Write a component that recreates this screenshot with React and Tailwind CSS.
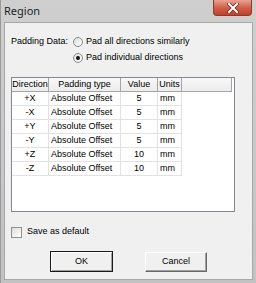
import React from "react";

const rows = [
  { dir: "+X", type: "Absolute Offset", value: "5", units: "mm" },
  { dir: "-X", type: "Absolute Offset", value: "5", units: "mm" },
  { dir: "+Y", type: "Absolute Offset", value: "5", units: "mm" },
  { dir: "-Y", type: "Absolute Offset", value: "5", units: "mm" },
  { dir: "+Z", type: "Absolute Offset", value: "10", units: "mm" },
  { dir: "-Z", type: "Absolute Offset", value: "10", units: "mm" },
];

function Radio({ checked }) {
  return (
    <span className="w-[10px] h-[10px] rounded-full border border-[#8d8d8d] bg-gradient-to-br from-[#dcdcdc] to-white flex items-center justify-center shrink-0">
      {checked && <span className="w-[4px] h-[4px] rounded-full bg-[#111]" />}
    </span>
  );
}

function CloseButton() {
  return (
    <div className="w-[39px] h-[16px] mr-[4px] rounded-b-[4px] border border-t-0 border-[#8b3b2c] bg-gradient-to-b from-[#e6a392] via-[#d2604a] to-[#c0402a] flex items-center justify-center">
      <svg width="12" height="10" viewBox="0 0 12 10">
        <path d="M2 1 L10 9 M10 1 L2 9" stroke="#5a2a22" strokeWidth="3.4" strokeLinecap="square" />
        <path d="M2 1 L10 9 M10 1 L2 9" stroke="#ffffff" strokeWidth="2" strokeLinecap="square" />
      </svg>
    </div>
  );
}

export default function App() {
  return (
    <div className="w-[256px] h-[283px] bg-gradient-to-b from-[#cfcfcf] to-[#c2c2c2] border-l border-[#9a9a9a] flex flex-col font-['Liberation_Sans',Arial,sans-serif] text-[9px] text-black overflow-hidden">
      {/* title bar */}
      <div className="h-[22px] flex items-start shrink-0">
        <span className="ml-[3px] mt-[4px] text-[11px] leading-[14px] font-['Noto_Sans',sans-serif] text-[#1e1e1e]">Region</span>
        <div className="ml-auto">
          <CloseButton />
        </div>
      </div>

      {/* client area */}
      <div className="mx-[3px] h-[258px] bg-[#f0f0f0] border border-[#a7a7a7] flex flex-col pl-[6px]">
        <div className="mt-[11px] flex flex-col">
          <div className="h-[16px] flex items-center">
            <span className="w-[62px]">Padding Data:</span>
            <Radio />
            <span className="ml-[3px]">Pad all directions similarly</span>
          </div>
          <div className="h-[16px] flex items-center">
            <span className="w-[62px]" />
            <Radio checked />
            <span className="ml-[3px]">Pad individual directions</span>
          </div>
        </div>

        {/* list */}
        <div className="mt-[11px] w-[224px] h-[135px] bg-white border border-[#828790] flex flex-col">
          <div className="flex h-[14px] pr-[2px]">
            {[
              ["Direction", "w-[37px] justify-center"],
              ["Padding type", "w-[72px] justify-center"],
              ["Value", "w-[37px] justify-center"],
              ["Units", "w-[24px] justify-center"],
              ["", "flex-1"],
            ].map(([label, cls], i) => (
              <div
                key={i}
                className={`${cls} flex items-center bg-gradient-to-b from-[#f8f8f8] to-[#ececec] border-r border-b border-[#a5a5a5] leading-none`}
              >
                {label}
              </div>
            ))}
          </div>
          {rows.map((r) => (
            <div key={r.dir} className="flex h-[14px]">
              <div className="w-[37px] flex items-center justify-center border-r border-b border-[#e2e2e2]">{r.dir}</div>
              <div className="w-[72px] flex items-center pl-[2px] border-r border-b border-[#e2e2e2]">{r.type}</div>
              <div className="w-[37px] flex items-center justify-center border-r border-b border-[#e2e2e2]">{r.value}</div>
              <div className="w-[24px] flex items-center pl-[2px] border-r border-b border-[#e2e2e2]">{r.units}</div>
            </div>
          ))}
        </div>

        <div className="mt-[15px] h-[10px] flex items-center">
          <span className="w-[11px] h-[11px] border border-[#8e8f8f] bg-gradient-to-br from-[#dedede] to-white shrink-0" />
          <span className="ml-[5px]">Save as default</span>
        </div>

        <div className="mt-[14px] flex items-start pl-[39px] gap-[32px]">
          <button className="w-[63px] h-[21px] border border-[#1a1a1a] bg-[#f0f0f0] shadow-[inset_1px_1px_0_#ffffff,inset_-1px_-1px_0_#a0a0a0] flex items-center justify-center">
            OK
          </button>
          <button className="w-[62px] h-[20px] mt-[1px] border border-t-white border-l-white border-r-[#696969] border-b-[#696969] bg-[#f0f0f0] shadow-[inset_-1px_-1px_0_#a0a0a0] flex items-center justify-center">
            Cancel
          </button>
        </div>
      </div>
    </div>
  );
}
